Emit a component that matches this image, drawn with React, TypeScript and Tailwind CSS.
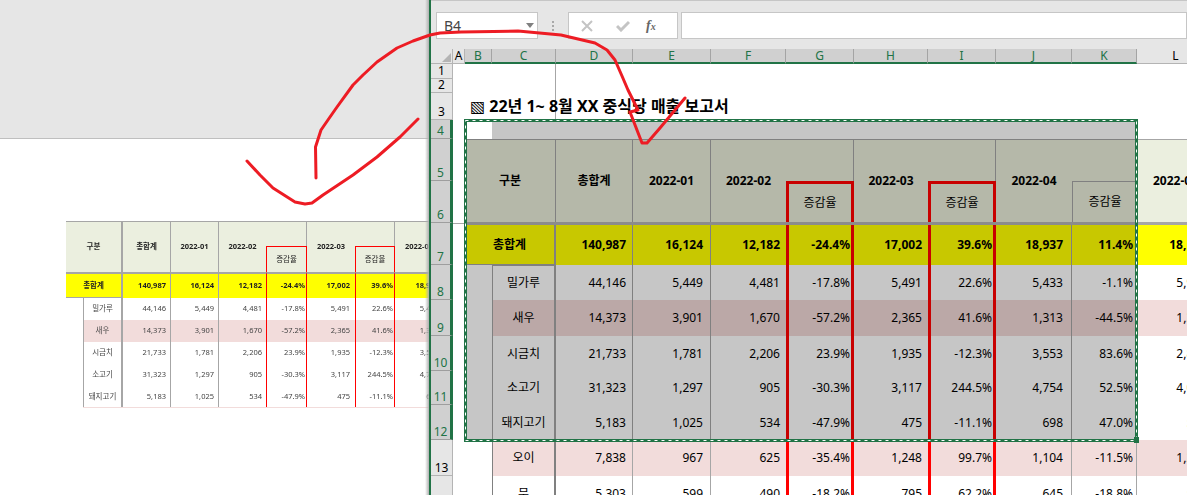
type Tone = "plain" | "pink";

const font = "font-['Noto_Sans','Noto_Sans_CJK_KR',sans-serif]";

const months = ["2022-01", "2022-02", "2022-03", "2022-04", "2022-05"];
const totals = ["140,987", "16,124", "12,182", "-24.4%", "17,002", "39.6%", "18,937", "11.4%", "18,172"];

const items: { name: string; tone: Tone; values: string[] }[] = [
  { name: "밀가루", tone: "plain", values: ["44,146", "5,449", "4,481", "-17.8%", "5,491", "22.6%", "5,433", "-1.1%", "5,950"] },
  { name: "새우", tone: "pink", values: ["14,373", "3,901", "1,670", "-57.2%", "2,365", "41.6%", "1,313", "-44.5%", "1,336"] },
  { name: "시금치", tone: "plain", values: ["21,733", "1,781", "2,206", "23.9%", "1,935", "-12.3%", "3,553", "83.6%", "2,812"] },
  { name: "소고기", tone: "plain", values: ["31,323", "1,297", "905", "-30.3%", "3,117", "244.5%", "4,754", "52.5%", "4,058"] },
  { name: "돼지고기", tone: "plain", values: ["5,183", "1,025", "534", "-47.9%", "475", "-11.1%", "698", "47.0%", "512"] },
  { name: "오이", tone: "pink", values: ["7,838", "967", "625", "-35.4%", "1,248", "99.7%", "1,104", "-11.5%", "1,230"] },
  { name: "무", tone: "plain", values: ["5,303", "599", "490", "-18.2%", "795", "62.2%", "645", "-18.8%", "512"] },
];

const pads = ["pr-[6px]", "pr-[7px]", "pr-[6px]", "pr-[1px]", "pr-[6px]", "pr-[1px]", "pr-[8px]", "pr-[3px]", "pr-[7px]"];
const miniPads = ["pr-[4px]", "pr-[4px]", "pr-[4px]", "pr-[1px]", "pr-[5px]", "pr-[1px]", "pr-[4px]"];

function numBorder(i: number, selected: boolean) {
  if (i === 3 || i === 5) return selected ? "border-x-[3px] border-[#c80000]" : "border-x-[3px] border-[#ff0000]";
  if (i === 0 || i === 1 || i === 6 || i === 7) return selected ? "border-r border-[#808080]" : "border-r border-[#a6a6a6]";
  return "";
}

function NameBox() {
  return (
    <div className="flex h-[49px] items-start border-t border-[#c6c6c6] bg-[#e6e6e6] pt-[11px] pl-[5px]">
      <div className="relative flex h-[27px] w-[102px] items-center border border-[#c6c6c6] bg-white pl-[7px] text-[14px] text-[#444]">
        B4
        <span className="absolute top-[10px] right-[3px] h-0 w-0 border-x-[4px] border-t-[5px] border-x-transparent border-t-[#808080]" />
      </div>
      <div className="ml-[14px] flex h-[27px] flex-col justify-center gap-[2px]">
        <span className="h-[2px] w-[2px] bg-[#a8a8a8]" />
        <span className="h-[2px] w-[2px] bg-[#a8a8a8]" />
        <span className="h-[2px] w-[2px] bg-[#a8a8a8]" />
      </div>
      <div className="ml-[14px] flex h-[27px] w-[110px] items-center border border-[#c6c6c6] bg-white">
        <svg width="12" height="12" viewBox="0 0 12 12" className="ml-[12px]" fill="none" stroke="#c4c4c4" strokeWidth="2">
          <path d="M1 1l10 10M11 1L1 11" />
        </svg>
        <svg width="14" height="12" viewBox="0 0 14 12" className="ml-[23px]" fill="none" stroke="#c4c4c4" strokeWidth="3">
          <path d="M1 6l4 4 8-8" />
        </svg>
        <span className="ml-[16px] font-['Liberation_Serif',serif] text-[14px] font-bold text-[#666] italic">
          f<span className="text-[10px]">x</span>
        </span>
      </div>
      <div className="ml-[3px] h-[27px] flex-1 border border-[#c6c6c6] bg-white" />
    </div>
  );
}

function ColumnHeader() {
  const letters = ["B", "C", "D", "E", "F", "G", "H", "I", "J", "K"];
  return (
    <div className="grid h-[15px] grid-cols-[22px_12px_27px_64px_77px_78px_75px_68px_74px_68px_76px_65px_77px] bg-[#e6e6e6] text-[12px] leading-[13px]">
      <div className="relative border-r border-b border-[#b4b4b4]">
        <span className="absolute right-[1px] bottom-[1px] h-0 w-0 border-b-[9px] border-l-[9px] border-b-[#b4b4b4] border-l-transparent" />
      </div>
      <div className="border-r border-b border-[#b4b4b4] text-center">A</div>
      {letters.map((l) => (
        <div key={l} className="border-r border-b-2 border-r-[#a4a4a4] border-b-[#217346] bg-[#d0d0d0] text-center text-[#217346]">
          {l}
        </div>
      ))}
      <div className="border-b border-[#b4b4b4] text-center">L</div>
    </div>
  );
}

function RowHeader() {
  const rows: [string, string, boolean][] = [
    ["1", "h-[15px]", false],
    ["2", "h-[14px]", false],
    ["3", "h-[27px]", false],
    ["4", "h-[19px]", true],
    ["5", "h-[42px]", true],
    ["6", "h-[42px]", true],
    ["7", "h-[42px]", true],
    ["8", "h-[35px]", true],
    ["9", "h-[36px]", true],
    ["10", "h-[35px]", true],
    ["11", "h-[34px]", true],
    ["12", "h-[35px]", true],
    ["13", "h-[36px]", false],
    ["14", "h-[36px]", false],
  ];
  return (
    <div className="flex w-[22px] shrink-0 flex-col text-[12px] leading-[14px]">
      {rows.map(([label, h, on]) => (
        <div
          key={label}
          className={`${h} flex items-end justify-center border-b ${
            on
              ? "border-r-[3px] border-b-[#9e9e9e] border-r-[#217346] bg-[#d0d0d0] text-[#217346]"
              : "border-r border-b-[#b4b4b4] border-r-[#b4b4b4] bg-[#e6e6e6]"
          }`}
        >
          {label}
        </div>
      ))}
    </div>
  );
}

function SheetGrid() {
  const head = "flex items-center justify-center border-t border-r border-t-[#808080] border-r-[#808080] bg-[#b5b8a9] font-bold";
  return (
    <div className="grid flex-1 grid-cols-[12px_27px_64px_77px_78px_75px_68px_74px_68px_76px_65px_77px] grid-rows-[15px_14px_27px_19px_42px_41px_3px_40px_35px_36px_35px_34px_35px_36px_36px] overflow-hidden text-[12px] text-black">
      {/* column A, frozen rows */}
      <div className="col-span-1 row-span-6 border-b-0" />
      <div className="col-span-2 border-r border-[#a6a6a6]" />
      <div className="col-span-9" />
      <div className="col-span-2 border-r border-[#a6a6a6]" />
      <div className="col-span-9" />
      <div className="col-span-2 flex items-end border-r border-[#a6a6a6] pb-[2px] pl-[5px]">
        <span className="text-[16px] leading-[22px] font-bold whitespace-nowrap">
          <span className="font-['DejaVu_Sans'] font-normal">▧</span> 22년 1~ 8월 XX 중식당 매출 보고서
        </span>
      </div>
      <div className="col-span-9" />
      <div className="bg-white" />
      <div className="col-span-9 bg-[#c6c6c6]" />
      <div />

      {/* header block */}
      <div className={`${head} col-span-2 row-span-2`}>구분</div>
      <div className={`${head} row-span-2`}>총합계</div>
      <div className={`${head} row-span-2`}>{months[0]}</div>
      <div className={`${head} row-span-2 border-r-0`}>{months[1]}</div>
      <div className="border-t border-r border-[#808080] bg-[#b5b8a9]" />
      <div className={`${head} row-span-2 border-r-0`}>{months[2]}</div>
      <div className="border-t border-r border-[#808080] bg-[#b5b8a9]" />
      <div className={`${head} row-span-2 border-r-0`}>{months[3]}</div>
      <div className="border-t border-[#808080] bg-[#b5b8a9]" />
      <div className="row-span-2 flex items-center justify-center border-t border-[#a6a6a6] bg-[#ebefdf] font-bold whitespace-nowrap">
        {months[4]}
      </div>
      <div className="flex items-center justify-center border-x-[3px] border-t-[3px] border-[#c80000] bg-[#b5b8a9]">증감율</div>
      <div className="flex items-center justify-center border-x-[3px] border-t-[3px] border-[#c80000] bg-[#b5b8a9]">증감율</div>
      <div className="flex items-center justify-center border-t border-l border-[#808080] bg-[#b5b8a9]">증감율</div>

      {/* double rule under the header */}
      <div className="flex items-center">
        <div className="h-px w-full bg-[#a6a6a6]" />
      </div>
      <div className="col-span-10 bg-[#8c8c8c]" />
      <div className="bg-[#a6a6a6]" />

      {/* total row */}
      <div />
      <div className="col-span-2 flex items-center justify-center border-r-2 border-b border-[#808080] bg-[#c8c800] font-bold">총합계</div>
      {totals.map((v, i) => {
        const selected = i < 8;
        return (
          <div
            key={i}
            className={`flex items-center justify-end font-bold whitespace-nowrap ${pads[i]} ${numBorder(i, selected)} ${
              selected ? "bg-[#c8c800]" : "bg-[#ffff00]"
            }`}
          >
            {v}
          </div>
        );
      })}

      {/* item rows */}
      {items.map((row, r) => {
        const inside = r < 5;
        const fill = row.tone === "pink" ? (inside ? "bg-[#bba8a7]" : "bg-[#f2dcdb]") : inside ? "bg-[#c6c6c6]" : "bg-white";
        return (
          <div key={row.name} className="contents">
            <div />
            <div className={inside ? "bg-[#c6c6c6]" : "bg-white"} />
            <div
              className={`flex items-center justify-center border-r-2 border-l border-[#808080] whitespace-nowrap ${fill} ${
                r === 0 ? "border-t" : ""
              }`}
            >
              {row.name}
            </div>
            {row.values.map((v, i) => {
              const selected = inside && i < 8;
              const cellFill =
                selected ? fill : row.tone === "pink" ? "bg-[#f2dcdb]" : "bg-white";
              return (
                <div
                  key={i}
                  className={`flex items-center justify-end whitespace-nowrap ${pads[i]} ${numBorder(i, selected)} ${cellFill}`}
                >
                  {v}
                </div>
              );
            })}
          </div>
        );
      })}
    </div>
  );
}

function MiniTable() {
  const head = "flex items-center justify-center border-t border-r border-[#a6a6a6] bg-[#ebefdf] font-bold";
  const red = "border-x border-[#ff0000]";
  return (
    <div className="grid grid-cols-[17px_40px_48px_48px_47px_41px_48px_40px_48px] grid-rows-[25px_26px_26px_22px_22px_22px_22px_21px_1px] text-[7.5px] text-[#222] blur-[0.25px]">
      <div className={`${head} col-span-2 row-span-2 border-r-2`}>구분</div>
      <div className={`${head} row-span-2`}>총합계</div>
      <div className={`${head} row-span-2`}>{months[0]}</div>
      <div className={`${head} row-span-2 border-r-0`}>{months[1]}</div>
      <div className="border-t border-r border-[#a6a6a6] bg-[#ebefdf]" />
      <div className={`${head} row-span-2 border-r-0`}>{months[2]}</div>
      <div className="border-t border-r border-[#a6a6a6] bg-[#ebefdf]" />
      <div className={`${head} row-span-2 border-r-0`}>{months[3]}</div>
      <div className={`flex items-center justify-center border-t bg-[#ebefdf] ${red}`}>증감율</div>
      <div className={`flex items-center justify-center border-t bg-[#ebefdf] ${red}`}>증감율</div>

      <div className="col-span-2 flex items-center justify-center border-t-2 border-r-2 border-b border-[#a6a6a6] bg-[#ffff00] font-bold">총합계</div>
      {totals.slice(0, 7).map((v, i) => (
        <div
          key={i}
          className={`flex items-center justify-end border-t-2 border-t-[#a6a6a6] bg-[#ffff00] font-bold whitespace-nowrap ${miniPads[i]} ${
            i === 3 || i === 5 ? "border-x border-x-[#ff0000]" : i < 2 ? "border-r border-r-[#a6a6a6]" : ""
          }`}
        >
          {v}
        </div>
      ))}

      {items.slice(0, 5).map((row) => (
        <div key={row.name} className="contents">
          <div />
          <div
            className={`flex items-center justify-center border-r-2 border-l border-[#a6a6a6] text-[#444] whitespace-nowrap ${
              row.tone === "pink" ? "bg-[#f2dcdb]" : "bg-white"
            }`}
          >
            {row.name}
          </div>
          {row.values.slice(0, 7).map((v, i) => (
            <div
              key={i}
              className={`flex items-center justify-end text-[#444] whitespace-nowrap ${miniPads[i]} ${
                row.tone === "pink" ? "bg-[#f2dcdb]" : "bg-white"
              } ${i === 3 || i === 5 ? "border-x border-x-[#ff0000]" : i < 2 ? "border-r border-r-[#a6a6a6]" : ""}`}
            >
              {v}
            </div>
          ))}
        </div>
      ))}
      <div />
      <div className="col-span-8 bg-[#f2dcdb]" />
    </div>
  );
}

function Overlay() {
  return (
    <svg className="pointer-events-none absolute top-0 left-0" width="1187" height="495" fill="none">
      <rect x="465.5" y="120.5" width="671" height="320" stroke="#217346" strokeWidth="3" />
      <rect x="465.5" y="120.5" width="671" height="320" stroke="#ffffff" strokeWidth="1" strokeDasharray="3 4" />
      <rect x="1134" y="437" width="5" height="6" fill="#217346" />
      <path
        d="M316 178 L315.5 147 L321 130 L330 117 L337 107 L353 85 L363 75 L377 62 L397 48 L413 41 L430 35 L440 33 L461 32 L518 31 L561 35 L595 43 L607 50 L615 60 L622 76 L628 90 L638 110 L630 112 L642 143 L647 143 L660 128 L685 98"
        stroke="#ed1c24"
        strokeWidth="3"
        strokeLinecap="round"
        strokeLinejoin="round"
      />
      <path
        d="M418 119 L400 137 L377 157 L353 175 L323 195 L312 203 L305 204 L295 202 L273 188 L260 175 L247 161"
        stroke="#ed1c24"
        strokeWidth="3"
        strokeLinecap="round"
        strokeLinejoin="round"
      />
    </svg>
  );
}

export default function App() {
  return (
    <div className={`relative flex h-[495px] w-[1187px] overflow-hidden bg-white ${font}`}>
      <div className="relative w-[429px] shrink-0 overflow-hidden">
        <div className="h-[139px] border-b border-[#bfbfbf] bg-[#e6e6e6]" />
        <div className="pt-[82px] pl-[66px]">
          <div className="w-[400px]">
            <MiniTable />
          </div>
        </div>
        <div className="absolute top-0 right-0 bottom-0 w-[4px] bg-gradient-to-r from-transparent to-[#b0b0b0]" />
      </div>
      <div className="w-[758px] shrink-0 overflow-hidden border-l-2 border-[#217346]">
        <NameBox />
        <ColumnHeader />
        <div className="flex">
          <RowHeader />
          <SheetGrid />
        </div>
      </div>
      <Overlay />
    </div>
  );
}
